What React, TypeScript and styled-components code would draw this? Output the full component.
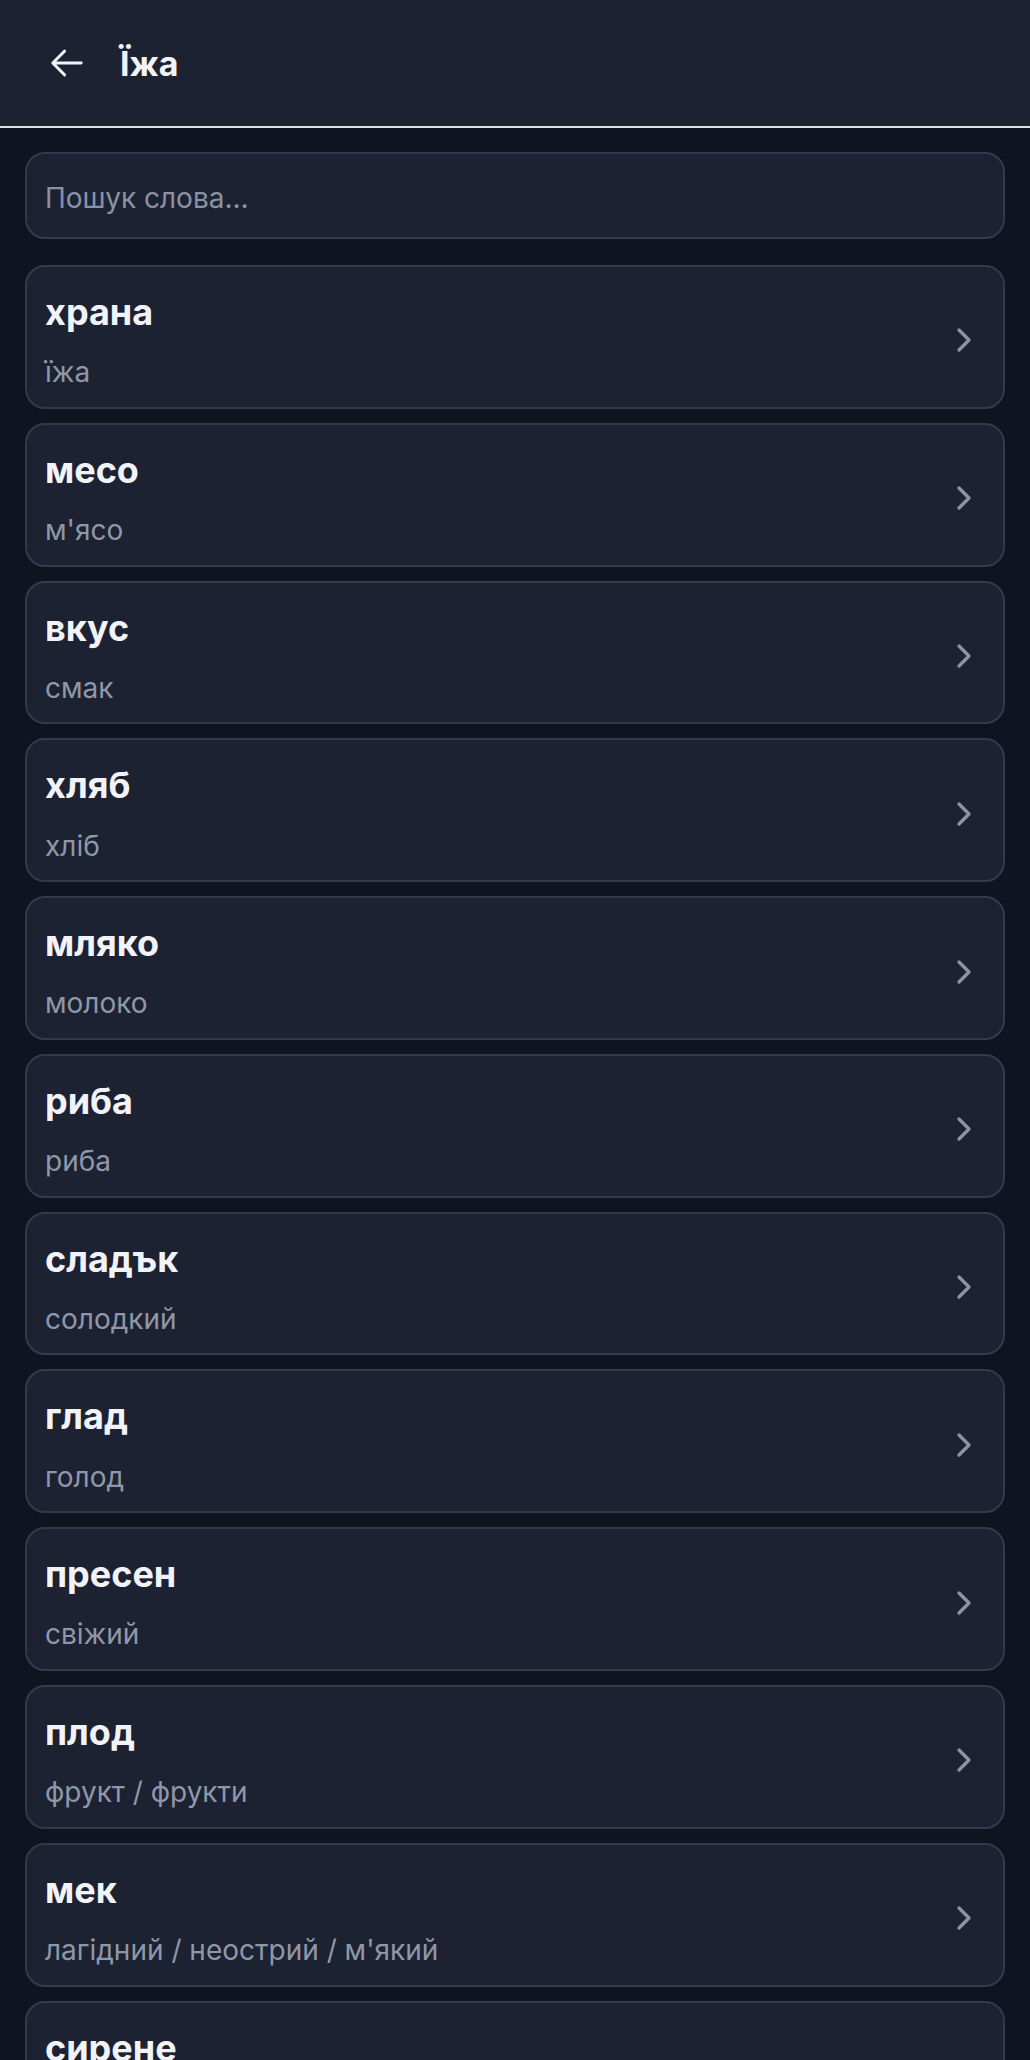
import * as React from 'react';
import styled, { createGlobalStyle } from 'styled-components';
import { ChevronRight } from 'lucide-react';

interface Word {
    bg: string;
    uk: string;
}

const words: Word[] = [
    { bg: 'храна', uk: 'їжа' },
    { bg: 'месо', uk: "м'ясо" },
    { bg: 'вкус', uk: 'смак' },
    { bg: 'хляб', uk: 'хліб' },
    { bg: 'мляко', uk: 'молоко' },
    { bg: 'риба', uk: 'риба' },
    { bg: 'сладък', uk: 'солодкий' },
    { bg: 'глад', uk: 'голод' },
    { bg: 'пресен', uk: 'свіжий' },
    { bg: 'плод', uk: 'фрукт / фрукти' },
    { bg: 'мек', uk: "лагідний / неострий / м'який" },
    { bg: 'сирене', uk: 'сир' },
];

const GlobalStyle = createGlobalStyle`
    body {
        margin: 0;
        background: #0f1420;
        font-family: Inter, "Noto Sans", sans-serif;
        -webkit-font-smoothing: antialiased;
    }
`;

export default function App() {
    const [query, setQuery] = React.useState('');

    const shown = words.filter(w =>
        w.bg.includes(query.toLowerCase()) || w.uk.includes(query.toLowerCase())
    );

    return (
        <Page>
            <GlobalStyle />
            <Header>
                <BackButton aria-label="Назад">
                    <svg width="38" height="38" viewBox="0 0 24 24" fill="none"
                        stroke="currentColor" strokeWidth="1.8"
                        strokeLinecap="round" strokeLinejoin="round">
                        <path d="M10.5 19.5 3 12m0 0 7.5-7.5M3 12h18" />
                    </svg>
                </BackButton>
                <Title>Їжа</Title>
            </Header>
            <Content>
                <Search
                    placeholder="Пошук слова..."
                    value={query}
                    onChange={e => setQuery(e.target.value)}
                />
                <List>
                    {shown.map(w => (
                        <Card key={w.bg}>
                            <Texts>
                                <Word>{w.bg}</Word>
                                <Translation>{w.uk}</Translation>
                            </Texts>
                            <Chevron size={40} strokeWidth={2} />
                        </Card>
                    ))}
                </List>
            </Content>
        </Page>
    );
}

const Page = styled.div`
    min-height: 100vh;
    background: #0f1420;
`;

const Header = styled.header`
    height: 126px;
    display: flex;
    align-items: center;
    gap: 34px;
    padding: 0 48px;
    background: #1d2232;
    border-bottom: 2px solid #e1e2e5;
`;

const BackButton = styled.button`
    display: flex;
    padding: 0;
    border: none;
    background: none;
    color: #f1f3f8;
    cursor: pointer;
`;

const Title = styled.h1`
    margin: 0;
    font-size: 34px;
    font-weight: 700;
    color: #f1f3f8;
`;

const Content = styled.main`
    padding: 24px 25px;
`;

const Search = styled.input`
    display: block;
    box-sizing: border-box;
    width: 100%;
    height: 87px;
    margin-bottom: 26px;
    padding: 4px 18px 0;
    border: 2px solid #343a4b;
    border-radius: 20px;
    background: #1d2232;
    color: #f1f3f8;
    font-family: Inter, "Noto Sans", sans-serif;
    font-size: 28px;
    outline: none;

    &::placeholder {
        color: #8b92a3;
    }
`;

const List = styled.div`
    display: flex;
    flex-direction: column;
    gap: 14px;
`;

const Card = styled.div`
    display: flex;
    align-items: center;
    justify-content: space-between;
    padding: 24px 19px 17px 18px;
    border: 2px solid #343a4b;
    border-radius: 20px;
    background: #1d2232;
    cursor: pointer;
`;

const Texts = styled.div`
    display: flex;
    flex-direction: column;
    gap: 22px;
`;

const Word = styled.div`
    font-size: 36px;
    line-height: 1.2;
    font-weight: 700;
    color: #f1f3f8;
`;

const Translation = styled.div`
    font-size: 28px;
    line-height: 1.2;
    color: #9097a8;
`;

const Chevron = styled(ChevronRight)`
    flex-shrink: 0;
    color: #8a93a8;
`;
